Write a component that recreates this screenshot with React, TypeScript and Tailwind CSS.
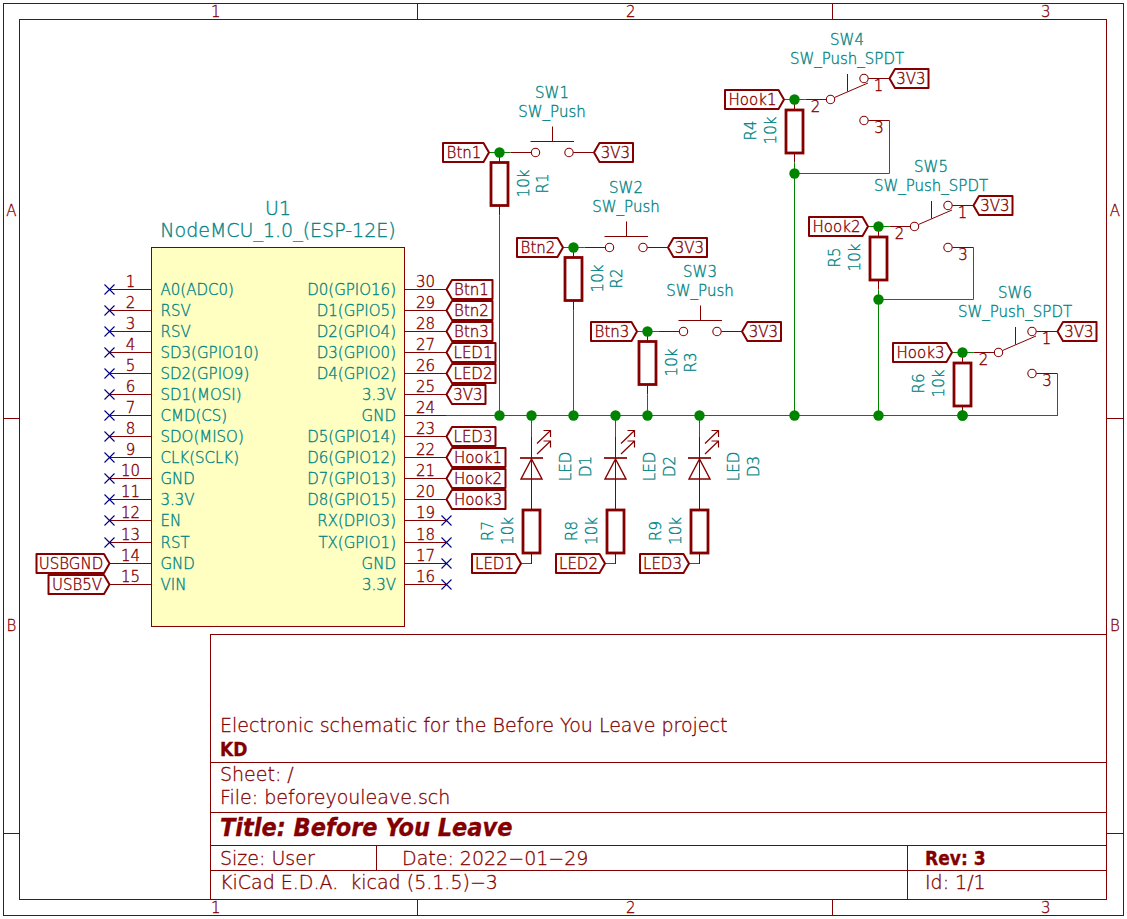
import React from "react";

const MAROON = "#840000";
const GREEN = "#008400";
const BLUE = "#000084";

type Point = { x: number; y: number };

function Line({ d, color = MAROON, width = 1 }: { d: string; color?: string; width?: number }) {
  return <path d={d} stroke={color} strokeWidth={width} fill="none" />;
}

function Junction({ x, y }: Point) {
  return <circle cx={x} cy={y} r={5.2} fill={GREEN} />;
}

type Anchor = "start" | "middle" | "end";

const tealText = "fill-[#008484] stroke-[#008484] [stroke-width:0.35]";
const maroonText = "fill-[#840000] stroke-[#840000] [stroke-width:0.35]";

function Name({ x, y, children, anchor = "middle" }: Point & { children: string; anchor?: Anchor }) {
  return (
    <text x={x} y={y} textAnchor={anchor} className={`text-[15px] ${tealText}`}>
      {children}
    </text>
  );
}

function VerticalName({ x, y, children }: Point & { children: string }) {
  return (
    <text transform={`translate(${x} ${y}) rotate(-90)`} textAnchor="middle" className={`text-[15px] ${tealText}`}>
      {children}
    </text>
  );
}

function PinNumber({ x, y, children }: Point & { children: React.ReactNode }) {
  return (
    <text x={x} y={y} textAnchor="middle" className={`text-[15px] ${maroonText}`}>
      {children}
    </text>
  );
}

const labelWidth: Record<string, number> = { Btn: 46, LED: 49, "3V3": 39, Hoo: 59, USBGND: 73, USB5V: 61 };

function NetLabel({ x, y, text, points }: Point & { text: string; points: "left" | "right" }) {
  const w = labelWidth[text] ?? labelWidth[text.slice(0, 3)];
  const s = points === "left" ? 1 : -1;
  const d = `M${x} ${y} L${x + 5.5 * s} ${y - 9.5} H${x + w * s} V${y + 9.5} H${x + 5.5 * s} Z`;
  const center = x + (s * (w + 4)) / 2;
  return (
    <g>
      <path d={d} fill="none" stroke={MAROON} strokeWidth={2} strokeLinejoin="round" />
      <text x={center} y={y + 5} textAnchor="middle" className={`text-[15px] ${maroonText}`}>
        {text}
      </text>
    </g>
  );
}

function Resistor({ x, y }: Point) {
  return <rect x={x - 8.5} y={y - 21.5} width={17} height={43} fill="none" stroke={MAROON} strokeWidth={2.8} />;
}

function NoConnect({ x, y }: Point) {
  return <Line d={`M${x - 5} ${y - 5} l10 10 m0 -10 l-10 10`} color={BLUE} width={1.1} />;
}

const leftPins = [
  "A0(ADC0)", "RSV", "RSV", "SD3(GPIO10)", "SD2(GPIO9)", "SD1(MOSI)", "CMD(CS)", "SDO(MISO)",
  "CLK(SCLK)", "GND", "3.3V", "EN", "RST", "GND", "VIN",
];

const rightPins: [string, string | null][] = [
  ["D0(GPIO16)", "Btn1"], ["D1(GPIO5)", "Btn2"], ["D2(GPIO4)", "Btn3"], ["D3(GPIO0)", "LED1"],
  ["D4(GPIO2)", "LED2"], ["3.3V", "3V3"], ["GND", "bus"], ["D5(GPIO14)", "LED3"],
  ["D6(GPIO12)", "Hook1"], ["D7(GPIO13)", "Hook2"], ["D8(GPIO15)", "Hook3"], ["RX(DPIO3)", null],
  ["TX(GPIO1)", null], ["GND", null], ["3.3V", null],
];

const pinY = (i: number) => Math.floor(289.2 + 21.07 * i) + 0.5;

function Microcontroller() {
  return (
    <g>
      <rect x={151.5} y={247.5} width={253} height={379} fill="#ffffc2" stroke={MAROON} />
      <text x={278} y={215} textAnchor="middle" className={`text-[19px] ${tealText}`}>U1</text>
      <text x={278} y={237} textAnchor="middle" className={`text-[19px] ${tealText}`}>NodeMCU_1.0_(ESP-12E)</text>
      {leftPins.map((name, i) => {
        const y = pinY(i);
        return (
          <g key={i}>
            <Line d={`M110 ${y} H151`} />
            <PinNumber x={130.5} y={y - 2.5}>{i + 1}</PinNumber>
            <Name x={160.5} y={y + 5} anchor="start">{name}</Name>
            {i < 13 && <NoConnect x={109.5} y={y} />}
          </g>
        );
      })}
      <NetLabel x={109.5} y={pinY(13)} text="USBGND" points="right" />
      <NetLabel x={109.5} y={pinY(14)} text="USB5V" points="right" />
      {rightPins.map(([name, net], i) => {
        const y = pinY(i);
        return (
          <g key={i}>
            <Line d={`M405 ${y} H446`} />
            <PinNumber x={425.5} y={y - 2.5}>{30 - i}</PinNumber>
            <Name x={396} y={y + 5} anchor="end">{name}</Name>
            {net === null && <NoConnect x={446.5} y={y} />}
            {net !== null && net !== "bus" && <NetLabel x={446.5} y={y} text={net} points="left" />}
          </g>
        );
      })}
    </g>
  );
}

function ButtonCircuit({ x, y, n }: Point & { n: number }) {
  return (
    <g>
      <Line d={`M${x - 10} ${y} H${x + 11}`} color={GREEN} />
      <Line d={`M${x + 11} ${y} H${x + 32} M${x + 74} ${y} H${x + 94}`} />
      <circle cx={x + 36} cy={y} r={4.2} fill="none" stroke={MAROON} strokeWidth={1.1} />
      <circle cx={x + 69.5} cy={y} r={4.2} fill="none" stroke={MAROON} strokeWidth={1.1} />
      <Line d={`M${x + 31} ${y - 11} H${x + 74.5} M${x + 53} ${y - 11} V${y - 26}`} />
      <Line d={`M${x} ${y + 54} V${y + 63} M${x} ${y} V${y + 10}`} />
      <Line d={`M${x} ${y + 63} V415.5`} color={GREEN} />
      <Resistor x={x} y={y + 31.5} />
      <Junction x={x} y={y} />
      <Junction x={x} y={415.5} />
      <NetLabel x={x - 10.5} y={y} text={`Btn${n}`} points="right" />
      <NetLabel x={x + 94.5} y={y} text="3V3" points="left" />
      <Name x={x + 52.5} y={y - 55}>{`SW${n}`}</Name>
      <Name x={x + 52.5} y={y - 35.5}>SW_Push</Name>
      <VerticalName x={x + 29} y={y + 31}>10k</VerticalName>
      <VerticalName x={x + 48.5} y={y + 31}>{`R${n}`}</VerticalName>
    </g>
  );
}

function HookCircuit({ x, y, n, loopY }: Point & { n: number; loopY: number }) {
  return (
    <g>
      <Line d={`M${x - 10} ${y} H${x + 11}`} color={GREEN} />
      <Line d={`M${x + 11} ${y} H${x + 32} M${x + 74} ${y - 21} H${x + 95} M${x + 74} ${y + 21} H${x + 95}`} />
      <circle cx={x + 36} cy={y} r={4.2} fill="none" stroke={MAROON} strokeWidth={1.1} />
      <circle cx={x + 69.5} cy={y - 21} r={4.2} fill="none" stroke={MAROON} strokeWidth={1.1} />
      <circle cx={x + 69.5} cy={y + 21} r={4.2} fill="none" stroke={MAROON} strokeWidth={1.1} />
      <Line d={`M${x + 40} ${y - 2} L${x + 73.5} ${y - 16.5} M${x + 53} ${y - 25.5} V${y - 8}`} />
      <Line d={`M${x} ${y + 54} V${y + 63} M${x} ${y} V${y + 10}`} />
      <Line d={`M${x + 95} ${y + 21} V${loopY} H${x} M${x} ${y + 63} V415.5`} color={GREEN} />
      <Resistor x={x} y={y + 32} />
      <Junction x={x} y={y} />
      <Junction x={x} y={loopY} />
      <Junction x={x} y={415.5} />
      <NetLabel x={x - 10.5} y={y} text={`Hook${n}`} points="right" />
      <NetLabel x={x + 95} y={y - 21} text="3V3" points="left" />
      <PinNumber x={x + 84} y={y - 8.5}>1</PinNumber>
      <PinNumber x={x + 21} y={y + 12.5}>2</PinNumber>
      <PinNumber x={x + 84.5} y={y + 33}>3</PinNumber>
      <Name x={x + 52.5} y={y - 54.5}>{`SW${n + 3}`}</Name>
      <Name x={x + 52.5} y={y - 35.5}>SW_Push_SPDT</Name>
      <VerticalName x={x - 18.5} y={y + 31}>10k</VerticalName>
      <VerticalName x={x - 38.5} y={y + 31}>{`R${n + 3}`}</VerticalName>
    </g>
  );
}

function LedCircuit({ x, n }: { x: number; n: number }) {
  return (
    <g>
      <Line d={`M${x} 415.5 V437 M${x - 11} 563.5 H${x}`} color={GREEN} />
      <Line d={`M${x} 437 V510 M${x} 553 V564`} />
      <Line d={`M${x - 11.5} 458 H${x + 11.5}`} width={1.7} />
      <Line d={`M${x} 459 L${x - 10.5} 479 H${x + 10.5} Z`} width={1.4} />
      <Line d={`M${x + 5.5} 443.5 L${x + 19} 430.5 M${x + 12} 430.5 H${x + 19} V437`} width={1.2} />
      <Line d={`M${x + 5.5} 454 L${x + 19} 441 M${x + 12} 441 H${x + 19} V447.5`} width={1.2} />
      <Resistor x={x} y={531.5} />
      <Junction x={x} y={415.5} />
      <NetLabel x={x - 10.5} y={563.5} text={`LED${n}`} points="right" />
      <VerticalName x={x + 39.5} y={466.5}>LED</VerticalName>
      <VerticalName x={x + 59} y={466.5}>{`D${n}`}</VerticalName>
      <VerticalName x={x - 19} y={531}>10k</VerticalName>
      <VerticalName x={x - 38.5} y={531}>{`R${n + 6}`}</VerticalName>
    </g>
  );
}

function Schematic() {
  return (
    <svg viewBox="20 20 1086 614" className="block h-auto w-full" role="img" aria-label="Circuit schematic">
      <Line d="M446 415.5 H1058" color={GREEN} />
      <Microcontroller />
      <ButtonCircuit x={499.5} y={152.5} n={1} />
      <ButtonCircuit x={573.5} y={247.5} n={2} />
      <ButtonCircuit x={647.5} y={331.5} n={3} />
      <LedCircuit x={531.5} n={1} />
      <LedCircuit x={615.5} n={2} />
      <LedCircuit x={699.5} n={3} />
      <HookCircuit x={794.5} y={99.5} n={1} loopY={173.5} />
      <HookCircuit x={878.5} y={226.5} n={2} loopY={299.5} />
      <HookCircuit x={962.5} y={352.5} n={3} loopY={415.5} />
    </svg>
  );
}

function ColumnZones() {
  return (
    <div className="flex h-[15px] text-[15px] leading-[17px]">
      <div className="w-[399px] border-r border-[#840000] pl-[192px]">1</div>
      <div className="w-[415px] border-r border-[#840000] pl-[208px]">2</div>
      <div className="flex-1 pl-[208px]">3</div>
    </div>
  );
}

function RowZones() {
  return (
    <div className="flex flex-col text-center text-[15px] leading-5">
      <div className="h-[400px] border-b border-[#840000] pt-[182px]">A</div>
      <div className="h-[415px] border-b border-[#840000] pt-[197px]">B</div>
    </div>
  );
}

function TitleBlock() {
  return (
    <div className="mt-auto ml-auto w-[896px] max-w-full border-t border-l border-[#840000] text-[19px] leading-6">
      <div className="flex h-[127px] flex-col justify-end pb-px pl-[9px]">
        <p>Electronic schematic for the Before You Leave project</p>
        <p className="font-['DejaVu_Sans_Condensed','DejaVu_Sans',sans-serif] font-bold">KD</p>
      </div>
      <div className="border-t border-[#840000] pb-[3px] pl-[9px] leading-[23px]">
        <p>Sheet: /</p>
        <p>File: beforeyouleave.sch</p>
      </div>
      <h1 className="border-t border-[#840000] pb-[2px] pl-[9px] font-['DejaVu_Sans_Condensed','DejaVu_Sans',sans-serif] text-[25px] leading-[30px] font-bold italic">
        Title: Before You Leave
      </h1>
      <div className="flex border-t border-[#840000]">
        <div className="w-[166px] border-r border-[#840000] pl-[9px]">Size: User</div>
        <div className="flex-1 pl-[25px]">Date: 2022−01−29</div>
        <div className="w-[199px] border-l border-[#840000] pl-[17px] font-['DejaVu_Sans_Condensed','DejaVu_Sans',sans-serif] font-bold">
          Rev: 3
        </div>
      </div>
      <div className="flex h-[29px] border-t border-[#840000] leading-[23px]">
        <div className="flex-1 pl-[9px] whitespace-pre">KiCad E.D.A.  kicad (5.1.5)−3</div>
        <div className="w-[199px] border-l border-[#840000] pl-[17px]">Id: 1/1</div>
      </div>
    </div>
  );
}

export default function App() {
  return (
    <main className="flex min-h-screen bg-white p-[3px] font-['DejaVu_Sans',sans-serif] font-extralight text-[#840000] [-webkit-text-stroke:0.3px_#840000]">
      <div className="grid flex-1 grid-cols-[15px_1fr_16px] grid-rows-[15px_1fr_15px] border border-[#840000]">
        <div />
        <ColumnZones />
        <div />
        <RowZones />
        <div className="flex flex-col border border-[#840000]">
          <Schematic />
          <TitleBlock />
        </div>
        <RowZones />
        <div />
        <ColumnZones />
        <div />
      </div>
    </main>
  );
}
